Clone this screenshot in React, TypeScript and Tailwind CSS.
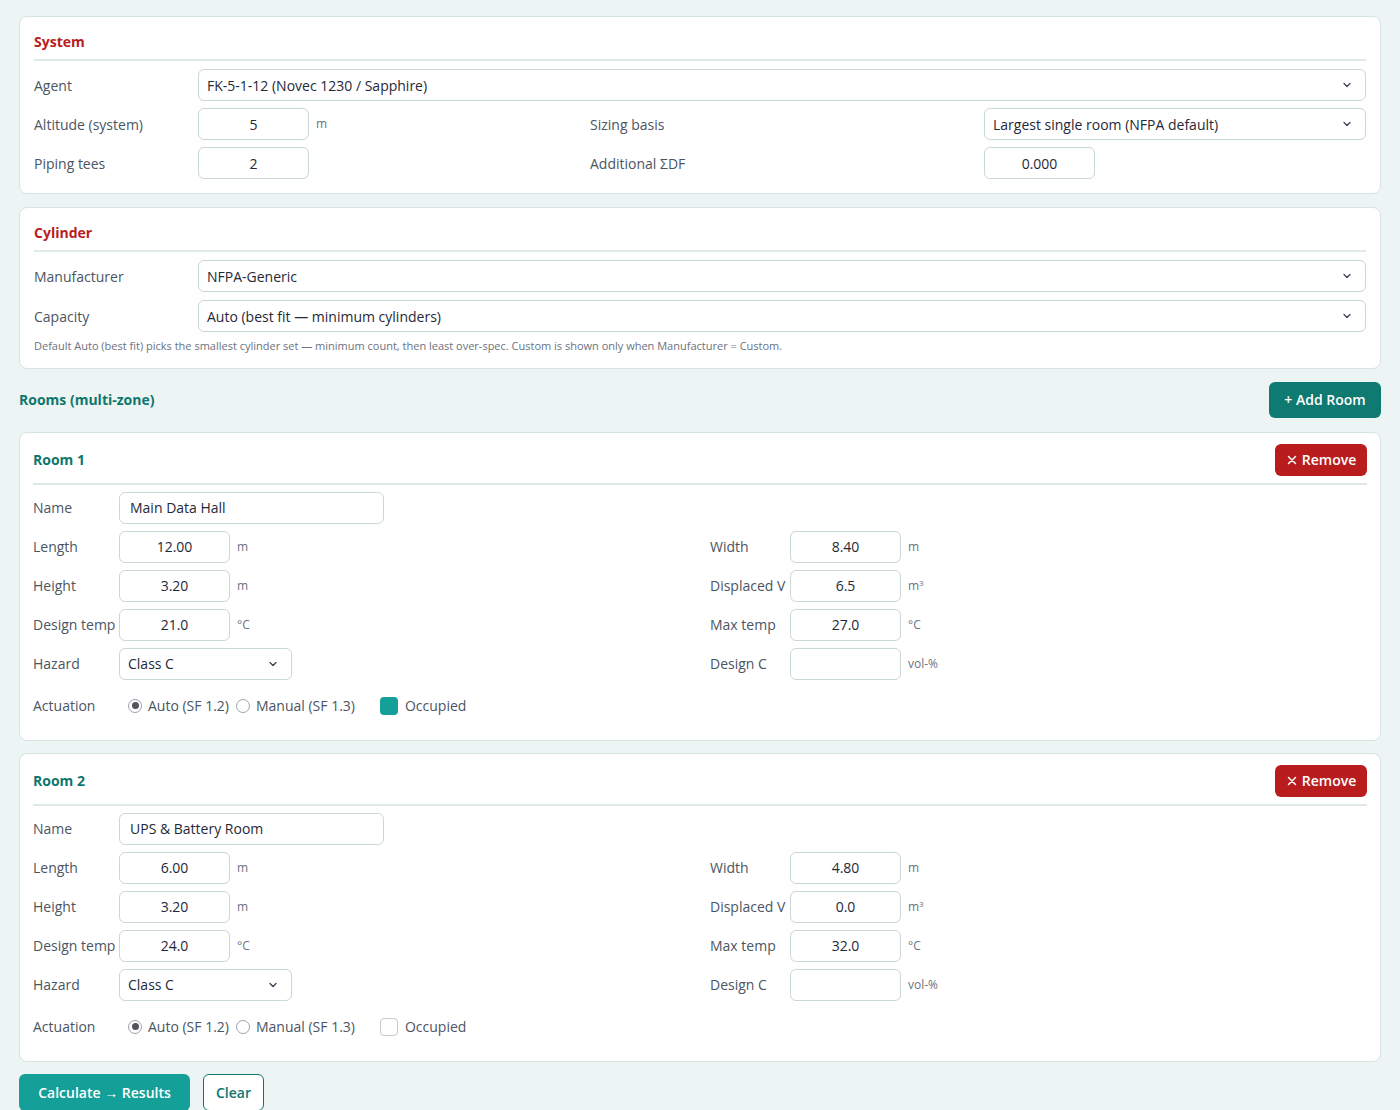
import React from "react";

const F = { fontFamily: '"Open Sans", "Noto Sans", sans-serif' };

function Chevron() {
  return (
    <svg width="12" height="12" viewBox="0 0 24 24" fill="none" stroke="#374151" strokeWidth="2.5" strokeLinecap="round" strokeLinejoin="round" className="absolute right-3 top-1/2 -translate-y-1/2">
      <path d="M6 9l6 6 6-6" />
    </svg>
  );
}

function Select({ value, className = "" }: { value: string; className?: string }) {
  return (
    <div className={`relative h-[32px] rounded-md border border-[#cad8d6] bg-white flex items-center pl-2 text-[14px] text-[#1f2937] ${className}`}>
      {value}
      <Chevron />
    </div>
  );
}

function Num({ value, className = "w-[111px]" }: { value: string; className?: string }) {
  return (
    <div className={`h-[32px] rounded-md border border-[#cad8d6] bg-white flex items-center justify-center text-[14px] text-[#1f2937] ${className}`}>
      {value}
    </div>
  );
}

const Unit = ({ children }: { children: React.ReactNode }) => (
  <span className="ml-[7px] text-[12px] text-[#6b7280]">{children}</span>
);

function SysRow({ label, children }: { label: string; children: React.ReactNode }) {
  return (
    <>
      <div className="text-[14px] text-[#4b5563] flex items-center">{label}</div>
      <div className="flex items-center">{children}</div>
    </>
  );
}

function Room({ n, name, len, wid, h, dv, dt, mt, occ }: any) {
  const Row = ({ label, children }: any) => (
    <div className="flex items-center h-[32px]">
      <div className="w-[86px] text-[14px] text-[#4b5563]">{label}</div>
      {children}
    </div>
  );
  const RRow = ({ label, children }: any) => (
    <div className="flex items-center h-[32px]">
      <div className="w-[80px] text-[14px] text-[#4b5563]">{label}</div>
      {children}
    </div>
  );
  return (
    <div className="bg-white rounded-lg border border-[#d6e4e2] px-[13px] pt-[11px] pb-[18px]">
      <div className="flex items-center justify-between pb-[7px] border-b-2 border-[#dfe9e8]">
        <div className="text-[14px] font-bold text-[#0f766e]">Room {n}</div>
        <button className="h-[32px] w-[92px] rounded-md bg-[#b91c1c] text-white text-[14px] font-semibold flex items-center justify-center gap-1">
          <svg width="12" height="12" viewBox="0 0 24 24" stroke="white" strokeWidth="3" strokeLinecap="round"><path d="M5 5l14 14M19 5L5 19" /></svg>
          Remove
        </button>
      </div>
      <div className="pt-[7px] flex flex-col gap-[7px]">
        <Row label="Name">
          <div className="h-[32px] w-[265px] rounded-md border border-[#cad8d6] flex items-center pl-[10px] text-[14px] text-[#1f2937]">{name}</div>
        </Row>
        <div className="flex">
          <div className="w-[677px] flex flex-col gap-[7px]">
            <Row label="Length"><Num value={len} /><Unit>m</Unit></Row>
            <Row label="Height"><Num value={h} /><Unit>m</Unit></Row>
            <Row label="Design temp"><Num value={dt} /><Unit>°C</Unit></Row>
            <Row label="Hazard"><Select value="Class C" className="w-[173px]" /></Row>
          </div>
          <div className="flex flex-col gap-[7px]">
            <RRow label="Width"><Num value={wid} /><Unit>m</Unit></RRow>
            <RRow label="Displaced V"><Num value={dv} /><Unit>m<sup className="text-[8px]">3</sup></Unit></RRow>
            <RRow label="Max temp"><Num value={mt} /><Unit>°C</Unit></RRow>
            <RRow label="Design C"><Num value="" /><Unit>vol-%</Unit></RRow>
          </div>
        </div>
        <div className="flex items-center h-[32px] mt-[3px] text-[14px] text-[#4b5563]">
          <div className="w-[95px]">Actuation</div>
          <span className="w-[14px] h-[14px] rounded-full border border-[#9ca3af] flex items-center justify-center mr-[6px]"><span className="w-[7px] h-[7px] rounded-full bg-[#555]" /></span>
          Auto (SF 1.2)
          <span className="w-[14px] h-[14px] rounded-full border border-[#9ca3af] ml-[7px] mr-[6px]" />
          Manual (SF 1.3)
          {occ ? (
            <span className="w-[18px] h-[18px] rounded bg-[#14a098] ml-[25px] mr-[7px]" />
          ) : (
            <span className="w-[18px] h-[18px] rounded border border-[#c4cccc] ml-[25px] mr-[7px]" />
          )}
          Occupied
        </div>
      </div>
    </div>
  );
}

export default function App() {
  return (
    <div style={F} className="min-h-[1110px] bg-[#edf5f4] px-[19px] pt-[16px] pb-4">
      <div className="bg-white rounded-lg border border-[#d6e4e2] px-[14px] pt-[14px] pb-[14px]">
        <div className="text-[14px] font-bold text-[#b91c1c] pb-[7px] border-b-2 border-[#dfe9e8]">System</div>
        <div className="grid grid-cols-[164px_392px_394px_1fr] gap-y-[7px] pt-[8px] auto-rows-[32px]">
          <div className="text-[14px] text-[#4b5563] flex items-center">Agent</div>
          <div className="col-span-3"><Select value="FK-5-1-12 (Novec 1230 / Sapphire)" /></div>
          <SysRow label="Altitude (system)"><Num value="5" /><Unit>m</Unit></SysRow>
          <SysRow label="Sizing basis"><Select value="Largest single room (NFPA default)" className="w-full" /></SysRow>
          <SysRow label="Piping tees"><Num value="2" /></SysRow>
          <SysRow label="Additional ΣDF"><Num value="0.000" /></SysRow>
        </div>
      </div>

      <div className="mt-[13px] bg-white rounded-lg border border-[#d6e4e2] px-[14px] pt-[14px] pb-[13px]">
        <div className="text-[14px] font-bold text-[#b91c1c] pb-[7px] border-b-2 border-[#dfe9e8]">Cylinder</div>
        <div className="grid grid-cols-[164px_1fr] gap-y-[8px] pt-[8px] auto-rows-[32px]">
          <SysRow label="Manufacturer"><Select value="NFPA-Generic" className="w-full" /></SysRow>
          <SysRow label="Capacity"><Select value="Auto (best fit — minimum cylinders)" className="w-full" /></SysRow>
        </div>
        <div className="mt-[6px] text-[11px] text-[#6b7280]">Default Auto (best fit) picks the smallest cylinder set — minimum count, then least over-spec. Custom is shown only when Manufacturer = Custom.</div>
      </div>

      <div className="mt-[13px] flex items-center justify-between">
        <div className="text-[14px] font-bold text-[#0f766e]">Rooms (multi-zone)</div>
        <button className="h-[36px] w-[112px] rounded-md bg-[#0f7a72] text-white text-[14px] font-semibold">+ Add Room</button>
      </div>

      <div className="mt-[14px] flex flex-col gap-[12px]">
        <Room n={1} name="Main Data Hall" len="12.00" wid="8.40" h="3.20" dv="6.5" dt="21.0" mt="27.0" occ />
        <Room n={2} name="UPS & Battery Room" len="6.00" wid="4.80" h="3.20" dv="0.0" dt="24.0" mt="32.0" occ={false} />
      </div>

      <div className="mt-[12px] flex gap-[13px]">
        <button className="h-[37px] w-[171px] rounded-md bg-[#14a098] text-white text-[14px] font-semibold">Calculate → Results</button>
        <button className="h-[37px] w-[61px] rounded-md border border-[#0f766e] bg-white text-[#0f766e] text-[14px] font-semibold">Clear</button>
      </div>
    </div>
  );
}
